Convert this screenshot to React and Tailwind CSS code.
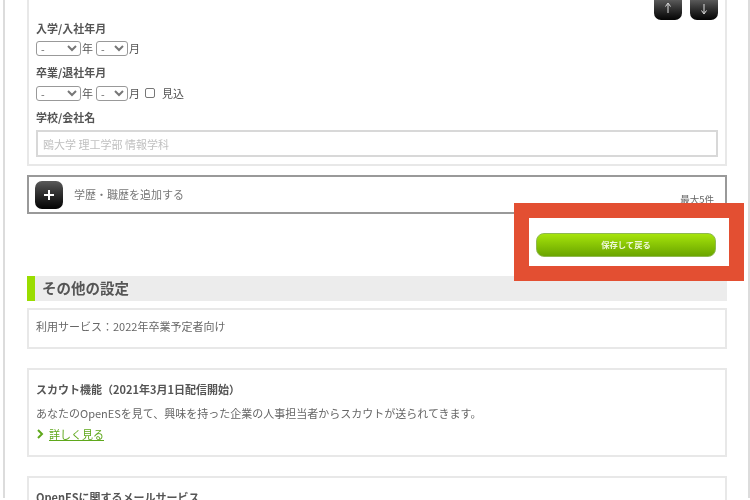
function DateRow({ check }) {
  return (
    <div className="flex items-center h-[16px] text-[11px] text-[#555]">
      <select className="w-[45px] h-[15px] border border-[#999] rounded-[3px] bg-white font-['Liberation_Sans'] text-[11px] text-[#777]">
        <option>-</option>
      </select>
      <span className="ml-[1px] w-[14px]">年</span>
      <select className="w-[32px] h-[15px] border border-[#999] rounded-[3px] bg-white font-['Liberation_Sans'] text-[11px] text-[#777]">
        <option>-</option>
      </select>
      <span className="ml-[1px]">月</span>
      {check && (
        <>
          <span className="ml-[5px] w-[10px] h-[10px] border border-[#777] rounded-[2px] bg-white" />
          <span className="ml-[7px]">見込</span>
        </>
      )}
    </div>
  );
}

function Label({ children }) {
  return <div className="text-[11px] leading-[16px] font-bold text-[#555]">{children}</div>;
}

function BlackButton({ className, children }) {
  return (
    <div className={`flex items-center justify-center bg-gradient-to-b from-[#5a5a5a] to-[#050505] ${className}`}>
      {children}
    </div>
  );
}

export default function App() {
  return (
    <div className="relative w-[750px] h-[500px] overflow-hidden bg-white font-['Noto_Sans_CJK_JP','Liberation_Sans',sans-serif] text-[#555] blur-[0.4px]">
      <div className="h-full ml-[3px] border-x-2 border-[#dcdcdc] pl-[22px] pr-[21px]">
        {/* 学歴フォーム */}
        <div className="-mt-[2px] h-[168px] border-2 border-[#e8e8e8] px-[7px]">
          <div className="flex justify-end gap-[8px] h-[20px]">
            <BlackButton className="w-[28px] h-[20px] rounded-b-[7px]">
              <svg width="8" height="12" viewBox="0 0 8 12" className="-mt-[4px]"><path d="M4 11V2M1.5 4.5L4 1l2.5 3.5" fill="none" stroke="#ddd" strokeWidth="1" /></svg>
            </BlackButton>
            <BlackButton className="w-[28px] h-[20px] rounded-b-[7px]">
              <svg width="8" height="12" viewBox="0 0 8 12" className="-mt-[2px]"><path d="M4 1v9M1.5 7.5L4 11l2.5-3.5" fill="none" stroke="#ddd" strokeWidth="1" /></svg>
            </BlackButton>
          </div>
          <Label>入学/入社年月</Label>
          <div className="mt-[4px]"><DateRow /></div>
          <div className="mt-[8px]"><Label>卒業/退社年月</Label></div>
          <div className="mt-[5px]"><DateRow check /></div>
          <div className="mt-[8px]"><Label>学校/会社名</Label></div>
          <input
            readOnly
            placeholder="鴎大学 理工学部 情報学科"
            className="mt-[5px] w-full h-[27px] border-2 border-[#d8d8d8] bg-white px-[5px] text-[11px] placeholder:text-[#c0c0c0]"
          />
        </div>

        {/* 追加ボタン */}
        <div className="mt-[9px] h-[39px] border-2 border-[#999] flex items-center pl-[6px] pr-[11px]">
          <BlackButton className="w-[28px] h-[28px] rounded-[7px]">
            <svg width="12" height="12" viewBox="0 0 12 12"><path d="M6 1v10M1 6h10" stroke="#fff" strokeWidth="2" /></svg>
          </BlackButton>
          <span className="ml-[11px] text-[11px] text-[#777]">学歴・職歴を追加する</span>
          <span className="ml-auto self-end mb-[6px] text-[9.5px] text-[#666]">最大5件</span>
        </div>

        <div className="flex justify-end pr-[11px] mt-[19px]">
          <div className="w-[180px] h-[24px] pb-[2px] rounded-[8px] border border-[#8fb94f] bg-gradient-to-b from-[#a6e40c] to-[#6aa500] flex items-center justify-center text-[8.3px] font-bold text-[#eef8d8]">
            保存して戻る
          </div>
        </div>

        {/* その他の設定 */}
        <div className="mt-[19px] h-[25px] pb-[2px] bg-[#ececec] border-l-[8px] border-[#99dd00] pl-[7px] flex items-center text-[14.5px] font-bold text-[#555]">
          その他の設定
        </div>

        <div className="mt-[7px] h-[41px] border-2 border-[#e8e8e8] px-[7px] pb-[5px] flex items-center text-[11px] text-[#666]">
          利用サービス：2022年卒業予定者向け
        </div>

        <div className="mt-[19px] h-[89px] border-2 border-[#e8e8e8] px-[7px] pt-[11px]">
          <div className="text-[11px] leading-[16px] font-bold text-[#555]">スカウト機能（2021年3月1日配信開始）</div>
          <div className="mt-[8px] text-[11px] leading-[16px] text-[#666]">あなたのOpenESを見て、興味を持った企業の人事担当者からスカウトが送られてきます。</div>
          <div className="mt-[5px] flex items-center text-[11px] leading-[16px] text-[#5fa81c]">
            <svg width="9" height="10" viewBox="0 0 9 10" className="mr-[4px]"><path d="M2 1l4 4-4 4" fill="none" stroke="#5fa81c" strokeWidth="2" /></svg>
            <span className="underline">詳しく見る</span>
          </div>
        </div>

        <div className="mt-[19px] h-[60px] border-2 border-[#e8e8e8] px-[7px] pt-[11px]">
          <div className="text-[11px] leading-[16px] font-bold text-[#555]">OpenESに関するメールサービス</div>
        </div>
      </div>

      {/* 赤枠の注釈 */}
      <div className="absolute left-[514px] top-[203px] w-[230px] h-[78px] border-[15px] border-[#e34f32]" />
    </div>
  );
}
